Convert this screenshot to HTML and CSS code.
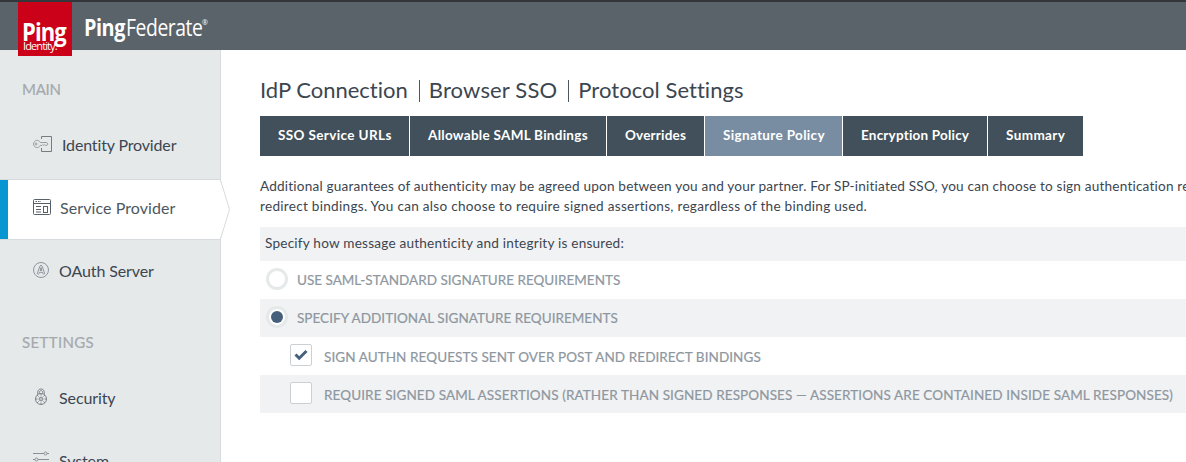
FILE: index.html
```html
<!DOCTYPE html>
<html lang="en">
<head>
<meta charset="utf-8">
<title>PingFederate</title>
<link rel="stylesheet" href="styles.css">
</head>
<body>
<header class="topbar">
  <div class="logo"><span class="logo-ping">Ping</span><span class="logo-identity">Identity.</span></div>
  <div class="product"><b class="product-ping">Ping</b><span class="product-fed">Federate</span><span class="product-reg">®</span></div>
</header>
<div class="layout">
  <nav class="sidebar">
    <h2 class="group t-main">MAIN</h2>
    <a class="item idp">
      <svg class="icon" width="20" height="18" viewBox="0 0 20 18" fill="none" stroke="#8d9499"><path d="M8.500 4V1.500H18.500V16.500H8.500V13" stroke="#757c82"/><path d="M7.300 7.500C6.500 5.800 5 5.200 3.600 5.400C1.800 5.700.6 7.300.6 9c0 1.800 1.300 3.300 3 3.500c1.500.2 3-.5 3.700-2.100H9l.8-.8.9.8.9-.8 1 .8H14L15 9l-1.300-1.500Z" stroke-width=".9"/><circle cx="3.200" cy="9" r="1" stroke-width=".8"/></svg>
      <span class="label">Identity Provider</span>
    </a>
    <a class="item sp">
      <svg class="icon" width="19" height="18" viewBox="0 0 19 18" fill="none" stroke="#596168"><rect x=".5" y="1.500" width="17" height="15" rx="1"/><path d="M.5 5.500H17.500"/><path d="M2.500 3.500H8" stroke-dasharray="1.500 1"/><path d="M3 8.500H8M3 11.500H8M3 14H8"/><rect x="10.500" y="8.500" width="4" height="6"/></svg>
      <span class="label">Service Provider</span>
      <svg class="pointer" width="11" height="61" viewBox="0 0 11 61"><path d="M0 1 9.500 30.500 0 60" fill="#fff"/><path d="M.5 1 9.500 30.500.5 60" fill="none" stroke="#d7dbdb"/></svg>
    </a>
    <a class="item oauth">
      <svg class="icon" width="17" height="18" viewBox="0 0 17 18" fill="none" stroke="#858c92" stroke-width=".9"><circle cx="8" cy="9" r="7.500"/><path d="M4.300 12.500 6.900 5.100Q8 3.200 9.100 5.100L11.700 12.500Q10.500 14.200 9.700 12.200L9.500 11.300H6.500L6.200 12.400Q5.400 14 4.300 12.500M7.200 9.500 8 6.500 8.800 9.500Z"/></svg>
      <span class="label">OAuth Server</span>
    </a>
    <h2 class="group t-settings">SETTINGS</h2>
    <a class="item security">
      <svg class="icon" width="17" height="18" viewBox="0 0 17 18" fill="none" stroke="#737a80" stroke-width=".9"><path d="M4.700 6.500V4.400C4.700-.2 11.300-.2 11.300 4.400V6.500M6.300 5.700V4.500C6.300 2 9.700 2 9.700 4.500V5.700"/><circle cx="8" cy="11" r="5.500"/><circle cx="8" cy="11" r="1.900"/><path d="M8 5.500V7.500M8 14.500V16.500M2.500 11H4.500M11.500 11H13.500M4.100 7.100 5.500 8.500M11.900 7.100 10.500 8.500M4.100 14.900 5.500 13.500M11.900 14.900 10.500 13.500"/><circle cx="8" cy="11" r=".3"/></svg>
      <span class="label">Security</span>
    </a>
    <a class="item system">
      <svg class="icon" width="17" height="18" viewBox="0 0 17 18" fill="none" stroke="#8a9196"><path d="M0 2.500H11M14 2.500H16M0 8.500H2M5 8.500H16M0 14.500H9M12 14.500H16"/><circle cx="12.500" cy="2.500" r="1.500"/><circle cx="3.500" cy="8.500" r="1.500"/><circle cx="10.500" cy="14.500" r="1.500"/></svg>
      <span class="label">System</span>
    </a>
  </nav>
  <main class="content">
    <h1 class="crumbs"><span class="crumb c1">IdP Connection</span><span class="crumb c2">Browser SSO</span><span class="crumb c3">Protocol Settings</span></h1>
    <div class="tabs">
      <a class="tab tab1"><span>SSO Service URLs</span></a>
      <a class="tab tab2"><span>Allowable SAML Bindings</span></a>
      <a class="tab tab3"><span>Overrides</span></a>
      <a class="tab tab4 active"><span>Signature Policy</span></a>
      <a class="tab tab5"><span>Encryption Policy</span></a>
      <a class="tab tab6"><span>Summary</span></a>
    </div>
    <p class="intro"><span class="lead">Additional guarantees of authenticity may be agreed upon between you and your partner. For SP-initiated SSO, you can choose to sign authentication re</span><br>redirect bindings. You can also choose to require signed assertions, regardless of the binding used.</p>
    <div class="rows">
      <div class="row head"><span>Specify how message authenticity and integrity is ensured:</span></div>
      <label class="row"><span class="radio"></span><span class="opt o1">USE SAML-STANDARD SIGNATURE REQUIREMENTS</span></label>
      <label class="row shade"><span class="radio on"></span><span class="opt o2">SPECIFY ADDITIONAL SIGNATURE REQUIREMENTS</span></label>
      <label class="row nested"><span class="check"><svg width="14" height="12" viewBox="0 0 14 12"><path d="M1.500 5.500 5.200 9.300 12.500 2" fill="none" stroke="#46607c" stroke-width="2.900"/></svg></span><span class="opt o3">SIGN AUTHN REQUESTS SENT OVER POST AND REDIRECT BINDINGS</span></label>
      <label class="row nested shade"><span class="check"></span><span class="opt o4">REQUIRE SIGNED SAML ASSERTIONS (RATHER THAN SIGNED RESPONSES — ASSERTIONS ARE CONTAINED INSIDE SAML RESPONSES)</span></label>
    </div>
  </main>
</div>
</body>
</html>
```
FILE: styles.css
```css
* { box-sizing: border-box; }
body { margin: 0; height: 462px; overflow: hidden; background: #fff; color: #3c4650; font-family: Lato, "Open Sans", sans-serif; font-variant-ligatures: none; white-space: nowrap; }
h1, h2, p { margin: 0; font-weight: 400; }
.topbar { display: flex; height: 50px; padding-left: 18px; border-top: 2px solid #33363b; background: #5a636a; color: #fff; }
.logo { position: relative; z-index: 2; display: flex; flex-direction: column; width: 54px; height: 54px; padding: 17px 0 0 4px; background: #cb0019; font-family: "Open Sans", sans-serif; }
.logo-ping { font-size: 25px; font-weight: 700; line-height: 24px; letter-spacing: -1px; transform: scaleX(.88); transform-origin: left; }
.logo-identity { margin: -3px 0 0 1px; font-size: 11px; line-height: 12px; letter-spacing: -.9px; }
.product { display: flex; align-items: flex-start; margin-left: 12px; padding-top: 11px; font-family: "Open Sans", sans-serif; font-size: 23px; line-height: 28px; }
.product-ping { width: 42px; letter-spacing: -.5px; transform: scaleX(.86); transform-origin: left; }
.product-fed { width: 76px; letter-spacing: -.5px; transform: scaleX(.84); transform-origin: left; }
.product-reg { font-size: 7px; line-height: 19px; }
.layout { display: flex; height: 412px; }
.sidebar { flex: none; width: 221px; background: #e5e9ea; border-right: 1px solid #d7dbdd; }
.group { padding: 29px 0 0 22px; font-size: 15px; line-height: 20px; color: #a4a8ad; -webkit-text-stroke: .2px #a4a8ad; }
.t-main { height: 63px; letter-spacing: -.3px; }
.t-settings { height: 63px; letter-spacing: .35px; }
.item { position: relative; display: flex; align-items: center; height: 63px; padding-left: 33px; font-size: 16px; color: #3c4650; }
.icon { flex: none; margin-top: -2px; }
.label { margin-left: 9px; line-height: 20px; letter-spacing: -.1px; }
.idp { height: 66px; padding-bottom: 2px; }
.idp .label { letter-spacing: -.15px; }
.sp { width: 220px; height: 61px; padding-bottom: 3px; background: #fff; border: solid #d7dbdd; border-width: 1px 0; color: #4d5860; box-shadow: inset 8px 0 #0896d3; }
.sp .label { margin-left: 8px; letter-spacing: .08px; }
.oauth { padding-bottom: 1px; }
.pointer { position: absolute; right: -11px; top: -1px; }
.system { height: 45px; padding-top: 19px; align-items: flex-start; }
.system .icon { margin-top: 3px; }
.system .label { margin-top: 3px; }
.content { flex: 1; min-width: 0; padding: 28px 0 0 39px; overflow: hidden; }
.crumbs { display: flex; height: 38px; font-size: 22px; line-height: 24px; }
.crumb { height: 24px; }
.c2 { letter-spacing: .15px; }
.c3 { letter-spacing: .05px; }
.crumb + .crumb { margin-left: 11px; padding-left: 10px; background: linear-gradient(#4d5860, #4d5860) 0 2px / 1px 22px no-repeat; }
.tabs { display: flex; gap: 1px; height: 40px; color: #fff; font-size: 13.500px; font-weight: 700; line-height: 39px; }
.tab { padding-left: 18px; background: #41505a; }
.active { background: #788da2; }
.tab1 { width: 149px; letter-spacing: .38px; }
.tab2 { width: 196px; letter-spacing: .27px; }
.tab3 { width: 97px; letter-spacing: .2px; }
.tab4 { width: 137px; letter-spacing: .34px; }
.tab5 { width: 144px; letter-spacing: .2px; }
.tab6 { width: 95px; letter-spacing: .4px; }
.intro { padding-top: 20px; height: 71px; font-size: 13.600px; line-height: 20px; letter-spacing: .27px; }
.lead { letter-spacing: .19px; }
.row { display: flex; align-items: center; height: 38px; padding-left: 6px; }
.head { height: 34px; padding: 0 0 2px 5px; background: #f1f2f4; font-size: 13.600px; letter-spacing: .21px; }
.shade { background: #f1f2f4; }
.nested { padding-left: 30px; }
.radio { flex: none; display: flex; align-items: center; justify-content: center; width: 22px; height: 22px; margin-top: -2px; border: 3px solid #e5e9ea; border-radius: 50%; background: #fff; }
.on::after { content: ""; width: 12px; height: 12px; border-radius: 50%; background: #46607c; }
.check { flex: none; display: flex; align-items: center; justify-content: center; width: 22px; height: 22px; margin-top: -2px; border: 1px solid #cdd0d2; border-radius: 2px; background: #fff; }
.opt { font-size: 13.500px; color: #8e979f; -webkit-text-stroke: .2px #8e979f; }
.radio + .opt { margin-left: 9px; }
.check + .opt { margin-left: 12px; margin-top: 2px; }
.o2 { letter-spacing: .03px; }
.o3 { letter-spacing: .08px; }
.o4 { letter-spacing: .11px; }
```
